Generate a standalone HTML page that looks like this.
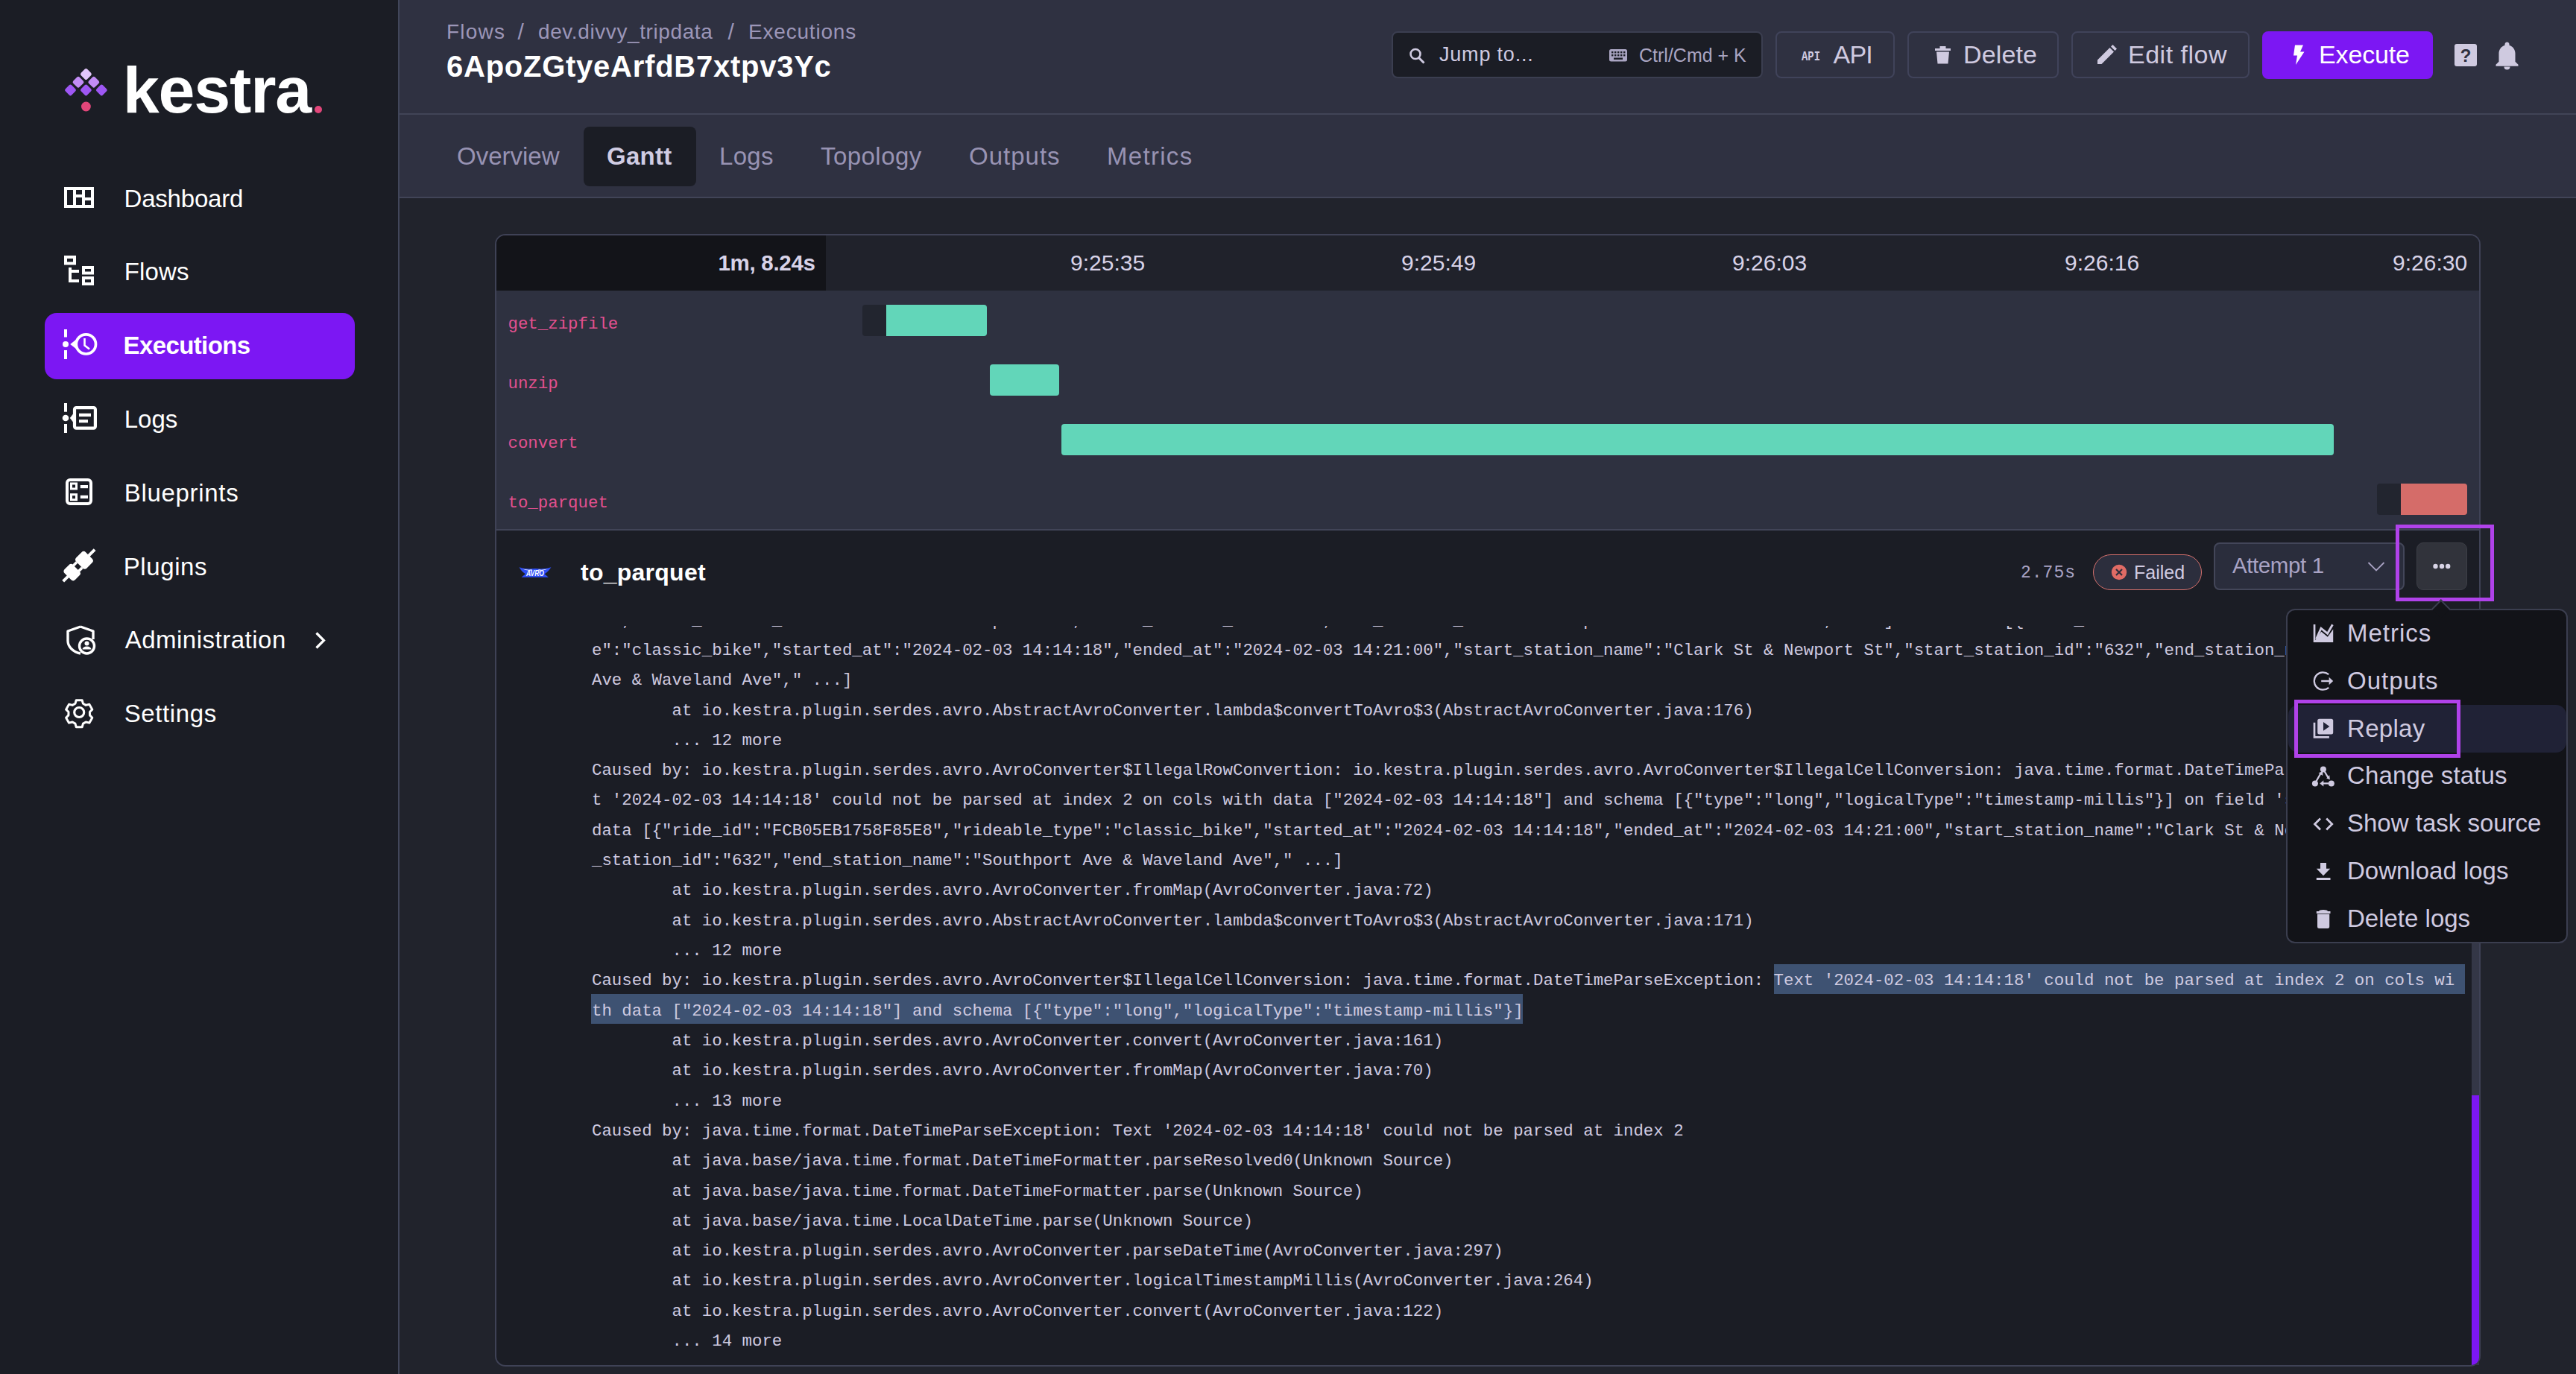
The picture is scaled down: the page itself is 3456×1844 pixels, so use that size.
<!DOCTYPE html>
<html><head><meta charset="utf-8">
<style>
*{margin:0;padding:0;box-sizing:border-box}
html,body{width:3456px;height:1844px;overflow:hidden;background:#21232c;font-family:"Liberation Sans",sans-serif}
.a{position:absolute}
.t{position:absolute;white-space:pre;line-height:1}
#side{left:0;top:0;width:534px;height:1844px;background:#1b1d25}
#sideb{left:534px;top:0;width:2px;height:1844px;background:#41465a}
#hdr{left:536px;top:0;width:2920px;height:153px;background:#2f3141}
#hdrb{left:536px;top:152px;width:2920px;height:2px;background:#414457}
#tabs{left:536px;top:154px;width:2920px;height:110px;background:#2f3141}
#tabsb{left:536px;top:264px;width:2920px;height:2px;background:#414457}
.mi{color:#ffffff;font-size:33px;letter-spacing:-0.6px}
.crumb{color:#9c96b8;font-size:28px}
.tab{color:#9893b3;font-size:33px;letter-spacing:-0.5px}
.btn{position:absolute;top:42px;height:63px;border:2px solid #40435a;border-radius:8px;background:#2f3141}
.btxt{color:#cfcae0;font-size:34px;letter-spacing:-0.6px}
.tm{top:337.5px;font-size:30px;color:#d8d3e8}
.gl{left:681.5px;font-size:22.4px;line-height:40.32px;font-family:"Liberation Mono",monospace;color:#e2508f}
.log{font-family:"Liberation Mono",monospace;font-size:22.4px;line-height:40.32px;color:#cfcae0;tab-size:8;white-space:pre}
.sel{}
.pi{color:#cfcae0;font-size:33px}
</style></head><body>
<!-- SIDEBAR -->
<div class="a" id="side"></div>
<div class="a" id="sideb"></div>
<!-- logo -->
<svg class="a" style="left:84px;top:86px" width="64" height="70" viewBox="84 86 64 70">
  <g transform="rotate(45 115.4 99.5)"><rect x="109.50" y="93.60" width="11.8" height="11.8" rx="2.4" fill="#e2c7fb"/></g>
  <g transform="rotate(45 105 110.2)"><rect x="99.10" y="104.30" width="11.8" height="11.8" rx="2.4" fill="#c28cf6"/></g>
  <g transform="rotate(45 125.8 110.2)"><rect x="119.90" y="104.30" width="11.8" height="11.8" rx="2.4" fill="#c28cf6"/></g>
  <g transform="rotate(45 94.5 120.9)"><rect x="88.60" y="115.00" width="11.8" height="11.8" rx="2.4" fill="#9e57f4"/></g>
  <g transform="rotate(45 115.4 120.9)"><rect x="109.50" y="115.00" width="11.8" height="11.8" rx="2.4" fill="#9e57f4"/></g>
  <g transform="rotate(45 136.3 120.9)"><rect x="130.40" y="115.00" width="11.8" height="11.8" rx="2.4" fill="#9e57f4"/></g>
  <circle cx="115.4" cy="143" r="6.4" fill="#e2467a"/>
</svg>
<div class="t" style="left:164.7px;top:77px;font-size:88px;font-weight:bold;color:#fff;letter-spacing:-1.15px">kestra</div>
<div class="a" style="left:421.8px;top:141.5px;width:10px;height:10px;border-radius:50%;background:#e2467a"></div>

<!-- menu -->
<div class="t mi" style="left:166.5px;top:250px;letter-spacing:-0.2px">Dashboard</div>
<div class="t mi" style="left:166.7px;top:348px;letter-spacing:0.15px">Flows</div>
<div class="a" style="left:60px;top:420px;width:416px;height:89px;border-radius:16px;background:#7c17f3"></div>
<div class="t mi" style="left:165.5px;top:447px;font-weight:bold">Executions</div>
<div class="t mi" style="left:166.7px;top:546px;letter-spacing:0px">Logs</div>
<div class="t mi" style="left:166.7px;top:645px;letter-spacing:0.7px">Blueprints</div>
<div class="t mi" style="left:165.7px;top:744px;letter-spacing:0.6px">Plugins</div>
<div class="t mi" style="left:167.7px;top:842px;letter-spacing:0.5px">Administration</div>
<div class="t mi" style="left:166.7px;top:941px;letter-spacing:0.6px">Settings</div>

<!-- sidebar icons -->
<svg class="a" style="left:0;top:0" width="534" height="1000" viewBox="0 0 534 1000">
 <g fill="#fff">
  <!-- dashboard -->
  <path fill-rule="evenodd" d="M86 251h40v28h-40z M90 255v20h8v-20z M102 255v6h8v-6z M102 265v10h8v-10z M114 255v10h8v-10z M114 269v6h8v-6z"/>
  <!-- flows -->
  <path fill-rule="evenodd" d="M86 343h16v12.5h-16z M90 347v4.5h8v-4.5z"/>
  <path d="M92 359h4v3h10v4h-10v9h10v4h-14z"/>
  <path fill-rule="evenodd" d="M110 357h16v11.6h-16z M114 361v3.6h8v-3.6z M110 371h16v12h-16z M114 375v4h8v-4z"/>
  <!-- executions -->
  <rect x="86" y="442" width="4" height="10.5"/><rect x="86" y="470" width="4" height="12"/>
  <circle cx="88" cy="462" r="4"/>
 </g>
 <circle cx="115.4" cy="461.9" r="13.1" fill="none" stroke="#fff" stroke-width="3.7"/>
 <path d="M103.2 454.8L94.2 461.9L103.2 469z" fill="#fff"/>
 <path d="M113.5 454v9.5l6.5 5" fill="none" stroke="#fff" stroke-width="2.6"/>
 <g fill="#fff">
  <!-- logs -->
  <rect x="86" y="541" width="4" height="11.7"/><rect x="86" y="569" width="4" height="12"/>
  <circle cx="88" cy="561" r="4.3"/>
  <rect x="106" y="554.8" width="16" height="4.3"/><rect x="106" y="563.2" width="12" height="4.1"/>
 </g>
 <path fill-rule="evenodd" fill="#fff" d="M102.4 545h23.1a4.5 4.5 0 0 1 4.5 4.5v22.7a4.5 4.5 0 0 1 -4.5 4.5h-23.1a4.5 4.5 0 0 1 -4.5 -4.5v-22.7a4.5 4.5 0 0 1 4.5 -4.5z M102.1 549.2v23.3h23.7v-23.3z"/>
 <path d="M98.5 555L93.8 561L98.5 567z" fill="#fff"/>
 <!-- blueprints -->
 <rect x="90" y="644" width="32" height="32" rx="4" fill="none" stroke="#fff" stroke-width="4"/>
 <rect x="95.5" y="649" width="7" height="7" fill="none" stroke="#fff" stroke-width="3"/>
 <rect x="95.5" y="663.7" width="7" height="7" fill="none" stroke="#fff" stroke-width="3"/>
 <rect x="107.8" y="651" width="10.2" height="4.2" fill="#fff"/>
 <rect x="107.8" y="664.8" width="10.2" height="4.2" fill="#fff"/>
 <!-- plugins -->
 <g transform="rotate(-45 105.9 758.9) translate(105.9 758.9)" fill="#fff">
  <rect x="-30" y="-2" width="10" height="4"/>
  <rect x="-21" y="-10" width="16" height="20" rx="4"/>
  <rect x="-6" y="-7" width="7" height="3.6"/><rect x="-6" y="3.4" width="7" height="3.6"/>
  <rect x="1" y="-10" width="18" height="20" rx="4"/>
  <rect x="18" y="-2" width="12" height="4"/>
 </g>
 <!-- administration -->
 <path d="M108 841l-17 6v13c0 8 7 15 17 17" fill="none" stroke="#fff" stroke-width="3.4" stroke-linejoin="round"/>
 <path d="M108 841l17 6v11" fill="none" stroke="#fff" stroke-width="3.4" stroke-linejoin="round"/>
 <circle cx="116.5" cy="867" r="10" fill="#1b1d25" stroke="#fff" stroke-width="3.4"/>
 <circle cx="116.5" cy="863.5" r="3" fill="#fff"/>
 <path d="M110.5 871.5a6 4 0 0 1 12 0z" fill="#fff"/>
 <path d="M424.5 849.5l10 10l-10 10" fill="none" stroke="#fff" stroke-width="3.2"/>
 <!-- settings gear -->
 <g transform="translate(106.2 956) scale(0.88)">
  <path fill="none" stroke="#fff" stroke-width="3.4" stroke-linejoin="round" d="M-4.5 -18.5h9l1.5 5.2l4.2 2.4l5.3 -1.3l4.5 7.8l-3.8 3.9v4.9l3.8 3.9l-4.5 7.8l-5.3 -1.3l-4.2 2.4l-1.5 5.2h-9l-1.5 -5.2l-4.2 -2.4l-5.3 1.3l-4.5 -7.8l3.8 -3.9v-4.9l-3.8 -3.9l4.5 -7.8l5.3 1.3l4.2 -2.4z"/>
  <circle r="7.4" fill="none" stroke="#fff" stroke-width="3.6"/>
 </g>
</svg>

<!-- HEADER -->
<div class="a" id="hdr"></div>
<div class="a" id="hdrb"></div>
<div class="a" id="tabs"></div>
<div class="a" id="tabsb"></div>
<!-- breadcrumb -->
<div class="t crumb" style="left:599px;top:29.4px;letter-spacing:1.2px">Flows</div>
<div class="t crumb" style="left:694.5px;top:28.4px;font-size:30px">/</div>
<div class="t crumb" style="left:722px;top:29.4px;letter-spacing:0.6px">dev.divvy_tripdata</div>
<div class="t crumb" style="left:976.5px;top:28.4px;font-size:30px">/</div>
<div class="t crumb" style="left:1004px;top:29.4px;letter-spacing:0.8px">Executions</div>
<div class="t" style="left:599px;top:69px;font-size:40px;font-weight:bold;color:#fff;letter-spacing:0.75px">6ApoZGtyeArfdB7xtpv3Yc</div>
<!-- tabs -->
<div class="a" style="left:783px;top:170px;width:151px;height:80px;border-radius:8px;background:#1b1d25"></div>
<div class="t tab" style="left:613px;top:193px;letter-spacing:0px">Overview</div>
<div class="t tab" style="left:814px;top:193px;font-weight:bold;color:#d0cce3;letter-spacing:0.3px">Gantt</div>
<div class="t tab" style="left:965px;top:193px;letter-spacing:0.3px">Logs</div>
<div class="t tab" style="left:1101px;top:193px;letter-spacing:0.45px">Topology</div>
<div class="t tab" style="left:1300px;top:193px;letter-spacing:1px">Outputs</div>
<div class="t tab" style="left:1485px;top:193px;letter-spacing:1.3px">Metrics</div>
<!-- header buttons -->
<div class="btn" style="left:1867px;width:498px;background:#1b1d25;border-color:#3b3e50"></div>
<div class="t" style="left:1931px;top:60px;font-size:27px;color:#cfcae0;letter-spacing:0.8px">Jump to...</div>
<div class="t" style="left:2199px;top:62px;font-size:25px;color:#aaa5c2">Ctrl/Cmd + K</div>
<div class="btn" style="left:2382px;width:160px"></div>
<div class="t btxt" style="left:2459.5px;top:56.3px;letter-spacing:-0.75px">API</div>
<div class="btn" style="left:2559px;width:203px"></div>
<div class="t btxt" style="left:2634px;top:56.3px;letter-spacing:0.15px">Delete</div>
<div class="btn" style="left:2779px;width:239px"></div>
<div class="t btxt" style="left:2855px;top:56.3px;letter-spacing:0.5px">Edit flow</div>
<div class="btn" style="left:3035px;width:229px;top:42px;height:64px;background:#7c17f3;border:none"></div>
<div class="t btxt" style="left:3111px;top:56.3px;color:#fff;letter-spacing:-0.15px">Execute</div>
<svg class="a" style="left:1860px;top:40px" width="1540" height="70" viewBox="1860 40 1540 70">
 <!-- search -->
 <circle cx="1899" cy="72.5" r="6.5" fill="none" stroke="#cfcae0" stroke-width="2.6"/>
 <path d="M1903.5 77.5l7 7" stroke="#cfcae0" stroke-width="3"/>
 <!-- keyboard -->
 <rect x="2159" y="66" width="24" height="16.5" rx="2.5" fill="#aaa5c2"/>
 <g fill="#1b1d25">
  <rect x="2162" y="69" width="2.4" height="2.4"/><rect x="2166" y="69" width="2.4" height="2.4"/><rect x="2170" y="69" width="2.4" height="2.4"/><rect x="2174" y="69" width="2.4" height="2.4"/><rect x="2178" y="69" width="2.4" height="2.4"/>
  <rect x="2162" y="73" width="2.4" height="2.4"/><rect x="2166" y="73" width="2.4" height="2.4"/><rect x="2170" y="73" width="2.4" height="2.4"/><rect x="2174" y="73" width="2.4" height="2.4"/><rect x="2178" y="73" width="2.4" height="2.4"/>
  <rect x="2165" y="77.5" width="12" height="2.4"/>
 </g>
 <!-- API icon -->
 <text x="2417" y="81" font-family="Liberation Mono" font-weight="bold" font-size="19" fill="#cfcae0" textLength="25" lengthAdjust="spacingAndGlyphs">API</text>
 <!-- trash -->
 <path d="M2596 65h21v3h-21z M2602.5 62h8v3h-8z M2598 69.5h17l-1.5 16h-14z" fill="#cfcae0"/>
 <!-- pencil -->
 <path d="M2814 80.5l16.5 -16.5l5.5 5.5l-16.5 16.5h-5.5z M2832 62.5l2.5 -2.5l5.5 5.5l-2.5 2.5z" fill="#cfcae0"/>
 <!-- bolt -->
 <path d="M3079 60.5h11l-4 9h5.5l-11.5 17.5l2 -12.5h-5z" fill="#fff"/>
 <!-- help -->
 <rect x="3293" y="59" width="30" height="30" rx="3" fill="#cfcae0"/>
 <text x="3308" y="83" text-anchor="middle" font-family="Liberation Sans" font-weight="bold" font-size="24" fill="#2f3141">?</text>
 <!-- bell -->
 <path d="M3363.5 56.5c-2 0 -3 1.5 -3 3v1.2c-5 1.5 -8 6 -8 11v11l-4 4v2h30v-2l-4 -4v-11c0 -5 -3 -9.5 -8 -11v-1.2c0 -1.5 -1 -3 -3 -3z M3359.5 89.5h8a4 4 0 0 1 -8 0z" fill="#cfcae0"/>
</svg>


<!-- GANTT CARD -->
<div class="a" style="left:664px;top:314px;width:2664px;height:1520px;border:2px solid #3f4256;border-radius:14px;overflow:hidden;background:#1b1d25">
 <div class="a" style="left:0;top:0;width:2660px;height:74px;background:#20222b"></div>
 <div class="a" style="left:0;top:0;width:442px;height:74px;background:#131419"></div>
 <div class="a" style="left:0;top:74px;width:2660px;height:320px;background:#2e3140"></div>
 <div class="a" style="left:0;top:394px;width:2660px;height:2px;background:#414457"></div>
</div>
<div class="t" style="left:963.5px;top:337.5px;font-size:29.5px;font-weight:bold;color:#d8d3e8;letter-spacing:-0.3px">1m, 8.24s</div>
<div class="t tm" style="left:1436px">9:25:35</div>
<div class="t tm" style="left:1880px">9:25:49</div>
<div class="t tm" style="left:2324px">9:26:03</div>
<div class="t tm" style="left:2770px">9:26:16</div>
<div class="t tm" style="left:3210px">9:26:30</div>
<div class="t gl" style="top:415px">get_zipfile</div>
<div class="t gl" style="top:495px">unzip</div>
<div class="t gl" style="top:575px">convert</div>
<div class="t gl" style="top:655px">to_parquet</div>
<div class="a" style="left:1157px;top:409px;width:32px;height:42px;border-radius:4px 0 0 4px;background:#22252f"></div>
<div class="a" style="left:1189px;top:409px;width:135px;height:42px;border-radius:0 4px 4px 0;background:#62d6b9"></div>
<div class="a" style="left:1328px;top:489px;width:93px;height:42px;border-radius:4px;background:#62d6b9"></div>
<div class="a" style="left:1424px;top:569px;width:1707px;height:42px;border-radius:4px;background:#62d6b9"></div>
<div class="a" style="left:3189px;top:649px;width:32px;height:42px;border-radius:4px 0 0 4px;background:#22252f"></div>
<div class="a" style="left:3221px;top:649px;width:89px;height:42px;border-radius:0 4px 4px 0;background:#d56c69"></div>

<!-- task row -->
<svg class="a" style="left:690px;top:750px" width="60" height="35" viewBox="690 750 60 35">
 <path d="M696.6 761.2Q705 764.5 718 763Q731 764.5 739.4 761.2Q735 768 730.5 770.2L735.8 774.8H699.5L705 770.2Q700 767.5 696.6 761.2Z" fill="#2f4ff6"/>
 <path d="M700.5 763.3Q709 765.5 713 764.2L714.5 765.3Q707 766.5 700.5 763.3Z M735.5 763.3Q727 765.5 723 764.2L721.5 765.3Q729 766.5 735.5 763.3Z" fill="#ffffff"/>
 <text x="718" y="773.2" text-anchor="middle" font-family="Liberation Sans" font-style="italic" font-weight="bold" font-size="10.5" fill="#ffffff" textLength="24" lengthAdjust="spacingAndGlyphs">AVRO</text>
</svg>
<div class="t" style="left:779px;top:751.5px;font-size:32px;font-weight:bold;color:#fff;letter-spacing:0.25px">to_parquet</div>
<div class="t" style="left:2711px;top:758px;font-size:23px;font-family:'Liberation Mono',monospace;color:#aaa4c4;letter-spacing:1px">2.75s</div>
<div class="a" style="left:2808px;top:744px;width:146px;height:48px;border:1.6px solid #d5706c;border-radius:24px;background:#2c2e3d"></div>
<svg class="a" style="left:2832px;top:757px" width="22" height="22" viewBox="0 0 22 22"><circle cx="11" cy="11" r="10.2" fill="#e06b65"/><path d="M7 7l8 8M15 7l-8 8" stroke="#2c2e3d" stroke-width="2.2"/></svg>
<div class="t" style="left:2863px;top:755.8px;font-size:25px;color:#d0cbe2">Failed</div>
<div class="a" style="left:2970px;top:728px;width:256px;height:64px;border:2px solid #434659;border-radius:8px;background:#2a2d3c"></div>
<div class="t" style="left:2995px;top:744px;font-size:29.5px;color:#a9a3c4;letter-spacing:-0.4px">Attempt 1</div>
<svg class="a" style="left:3176px;top:753px" width="24" height="15" viewBox="0 0 24 15"><path d="M1.5 2l10.5 10.5l10.5 -10.5" fill="none" stroke="#a9a3c4" stroke-width="1.8"/></svg>
<div class="a" style="left:3242px;top:728px;width:68px;height:64px;border:1.5px solid #3c3e46;border-radius:9px;background:#31333b"></div>
<svg class="a" style="left:3260px;top:753px" width="32" height="14" viewBox="0 0 32 14"><circle cx="7.5" cy="7" r="3.2" fill="#d8d4e6"/><circle cx="16" cy="7" r="3.2" fill="#d8d4e6"/><circle cx="24.2" cy="7" r="3.2" fill="#d8d4e6"/></svg>

<!-- logs -->
<div class="a" style="left:2380px;top:1294px;width:927px;height:40px;background:#3e5272"></div>
<div class="a" style="left:793px;top:1334px;width:1250px;height:40px;background:#3e5272"></div>
<div class="a" style="left:666px;top:840px;width:2660px;height:992px;overflow:hidden">
<pre class="log" style="position:absolute;left:128px;top:-27.4px">00","start_station_name":"Clark St &amp; Newport St","start_station_id":"632","end_station_name":"Southport Ave &amp; Waveland Ave"," ...] with data [{"ride_id":"FCB05EB1758F85E8","rideable_typ
e":"classic_bike","started_at":"2024-02-03 14:14:18","ended_at":"2024-02-03 14:21:00","start_station_name":"Clark St &amp; Newport St","start_station_id":"632","end_station_name":"Southport 
Ave &amp; Waveland Ave"," ...]
	at io.kestra.plugin.serdes.avro.AbstractAvroConverter.lambda$convertToAvro$3(AbstractAvroConverter.java:176)
	... 12 more
Caused by: io.kestra.plugin.serdes.avro.AvroConverter$IllegalRowConvertion: io.kestra.plugin.serdes.avro.AvroConverter$IllegalCellConversion: java.time.format.DateTimeParseException: Tex
t '2024-02-03 14:14:18' could not be parsed at index 2 on cols with data ["2024-02-03 14:14:18"] and schema [{"type":"long","logicalType":"timestamp-millis"}] on field 'started_at' for 
data [{"ride_id":"FCB05EB1758F85E8","rideable_type":"classic_bike","started_at":"2024-02-03 14:14:18","ended_at":"2024-02-03 14:21:00","start_station_name":"Clark St &amp; Newport St","start
_station_id":"632","end_station_name":"Southport Ave &amp; Waveland Ave"," ...]
	at io.kestra.plugin.serdes.avro.AvroConverter.fromMap(AvroConverter.java:72)
	at io.kestra.plugin.serdes.avro.AbstractAvroConverter.lambda$convertToAvro$3(AbstractAvroConverter.java:171)
	... 12 more
Caused by: io.kestra.plugin.serdes.avro.AvroConverter$IllegalCellConversion: java.time.format.DateTimeParseException: <span class="sel">Text '2024-02-03 14:14:18' could not be parsed at index 2 on cols wi</span>
<span class="sel">th data ["2024-02-03 14:14:18"] and schema [{"type":"long","logicalType":"timestamp-millis"}]</span>
	at io.kestra.plugin.serdes.avro.AvroConverter.convert(AvroConverter.java:161)
	at io.kestra.plugin.serdes.avro.AvroConverter.fromMap(AvroConverter.java:70)
	... 13 more
Caused by: java.time.format.DateTimeParseException: Text '2024-02-03 14:14:18' could not be parsed at index 2
	at java.base/java.time.format.DateTimeFormatter.parseResolved0(Unknown Source)
	at java.base/java.time.format.DateTimeFormatter.parse(Unknown Source)
	at java.base/java.time.LocalDateTime.parse(Unknown Source)
	at io.kestra.plugin.serdes.avro.AvroConverter.parseDateTime(AvroConverter.java:297)
	at io.kestra.plugin.serdes.avro.AvroConverter.logicalTimestampMillis(AvroConverter.java:264)
	at io.kestra.plugin.serdes.avro.AvroConverter.convert(AvroConverter.java:122)
	... 14 more</pre>
</div>
<!-- scrollbar -->
<div class="a" style="left:3316px;top:840px;width:10px;height:992px;background:#343747"></div>
<div class="a" style="left:3316px;top:1470px;width:10px;height:362px;background:#7c17f3;border-bottom-right-radius:12px"></div>
<!-- highlight box on ... -->
<div class="a" style="left:3214px;top:704.4px;width:132px;height:102.4px;border:5.6px solid #b042ea"></div>

<!-- POPUP -->
<div class="a" style="left:3067px;top:817px;width:378px;height:449px;border:2px solid #3b3e4f;border-radius:12px;background:#121318"></div>
<div class="a" style="left:3266.2px;top:808.2px;width:17.6px;height:17.6px;transform:rotate(45deg);background:#121318;border-left:2px solid #3b3e4f;border-top:2px solid #3b3e4f"></div>
<div class="a" style="left:3069.7px;top:946px;width:373.7px;height:63.6px;border-radius:14px;background:#202236"></div>
<div class="t pi" style="left:3149px;top:833px;letter-spacing:1px">Metrics</div>
<div class="t pi" style="left:3149px;top:896.7px;letter-spacing:1px">Outputs</div>
<div class="t pi" style="left:3149px;top:960.6px;letter-spacing:0.3px">Replay</div>
<div class="t pi" style="left:3149px;top:1024.2px;letter-spacing:0.15px">Change status</div>
<div class="t pi" style="left:3149px;top:1088px">Show task source</div>
<div class="t pi" style="left:3149px;top:1152px">Download logs</div>
<div class="t pi" style="left:3149px;top:1215.6px">Delete logs</div>

<svg class="a" style="left:3095px;top:830px" width="45" height="420" viewBox="3095 830 45 420">
 <g fill="#cfcae0">
  <!-- metrics chart -->
 <path d="M3103.7 838h2.7v21h23.8v2.9h-26.5z" fill="#cfcae0"/>
 <path d="M3106.4 859L3114.3 847.8L3122.8 854.8L3130.2 844.5V859Z" fill="#cfcae0"/>
 <path d="M3107.6 857.6L3114 843.2L3122.6 850.2L3129.4 838.3" fill="none" stroke="#cfcae0" stroke-width="2.9"/>
 </g>
 <!-- outputs: circle with arrow -->
 <path d="M3124.2 905.2A11.7 11.7 0 1 0 3124.2 922.8" fill="none" stroke="#cfcae0" stroke-width="2.3"/>
 <path d="M3114.2 914h11.5" stroke="#cfcae0" stroke-width="2.4"/>
 <path d="M3124.6 908.8l5.6 5.2l-5.6 5.2z" fill="#cfcae0"/>
 <!-- replay -->
 <rect x="3109.2" y="964.7" width="21" height="20.8" rx="2.5" fill="#cfcae0"/>
 <path d="M3117 969v11.8l8.3 -5.9z" fill="#202236"/>
 <path d="M3105 969.7v19.7h19.9" fill="none" stroke="#cfcae0" stroke-width="2.7"/>
 <!-- change status -->
 <circle cx="3116.9" cy="1032.6" r="4" fill="#cfcae0"/>
 <circle cx="3105.9" cy="1051.4" r="4" fill="#cfcae0"/>
 <circle cx="3127.8" cy="1051.4" r="4" fill="#cfcae0"/>
 <path d="M3107.5 1048.5l6 -10.5 M3118.8 1035.5l4.6 8 M3125 1051.4h-9.5" fill="none" stroke="#cfcae0" stroke-width="2.3"/>
 <path d="M3110.5 1037.4l5.6 -2.4l0.2 6z M3121.2 1044.6l4.6 1.6l-0.6 -6z M3117.3 1047.3l-5 4.1l5 4.1z" fill="#cfcae0"/>
 <!-- code -->
 <path d="M3113 1098.5l-7.5 7.5l7.5 7.5 M3121.2 1098.5l7.5 7.5l-7.5 7.5" fill="none" stroke="#cfcae0" stroke-width="2.8"/>
 <!-- download -->
 <path d="M3113 1158h8v7.8h5.2l-9.2 9.4l-9.2 -9.4h5.2z" fill="#cfcae0"/>
 <rect x="3107.8" y="1178" width="18.7" height="3" fill="#cfcae0"/>
 <!-- trash -->
 <path d="M3107.8 1223h18.7v3h-18.7z M3111 1223a6 2 0 0 1 12 0z M3109 1226.8h16.2v16.7a2.5 2.5 0 0 1 -2.5 2.5h-11.2a2.5 2.5 0 0 1 -2.5 -2.5z" fill="#cfcae0"/>
</svg>
<div class="a" style="left:3077.7px;top:939px;width:223.6px;height:78.3px;border:5.7px solid #b042ea"></div>

</body></html>
